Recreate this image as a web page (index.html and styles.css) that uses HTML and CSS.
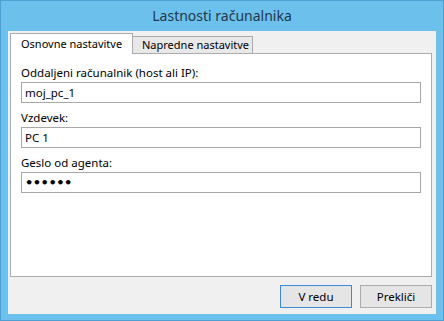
FILE: index.html
```html
<!DOCTYPE html>
<html lang="sl">
<head>
    <meta charset="UTF-8">
    <meta name="viewport" content="width=device-width, initial-scale=1.0">
    <title>Lastnosti računalnika</title>
    <link rel="stylesheet" href="styles.css">
</head>
<body>
    <div class="window">
        <div class="titlebar">Lastnosti računalnika</div>
        <div class="client">
            <div class="tabs">
                <div class="tab active">Osnovne nastavitve</div>
                <div class="tab">Napredne nastavitve</div>
            </div>
            <div class="panel">
                <label for="host">Oddaljeni računalnik (host ali IP):</label>
                <input type="text" id="host" value="moj_pc_1">
                <label for="alias">Vzdevek:</label>
                <input type="text" id="alias" value="PC 1">
                <label for="pass">Geslo od agenta:</label>
                <input type="password" id="pass" value="secret">
            </div>
            <div class="buttons">
                <button class="default">V redu</button>
                <button>Prekliči</button>
            </div>
        </div>
    </div>
</body>
</html>
```

FILE: styles.css
```css
html, body {
    margin: 0;
    padding: 0;
}

body {
    font-family: 'Noto Sans', 'Open Sans', sans-serif;
    font-size: 11.5px;
    color: #000;
}

.window {
    width: 444px;
    height: 321px;
    box-sizing: border-box;
    background-color: #6bc0ec;
    border: 1px solid #4f9fd2;
    padding: 0 7px 7px 7px;
    display: flex;
    flex-direction: column;
}

.titlebar {
    height: 30px;
    line-height: 30px;
    text-align: center;
    font-size: 14px;
    color: #22384c;
}

.client {
    flex: 1;
    background-color: #f0f0f0;
    padding: 2px 4px 6px 2px;
    display: flex;
    flex-direction: column;
}

.tabs {
    display: flex;
    align-items: flex-end;
    height: 20px;
    position: relative;
    z-index: 1;
}

.tab {
    height: 17px;
    line-height: 16px;
    padding: 0 0 0 9px;
    box-sizing: border-box;
    border: 1px solid #acacac;
    border-bottom: none;
    background-color: #e8e8e8;
    width: 121px;
    white-space: nowrap;
    overflow: hidden;
    font-size: 11px;
}

.tab.active {
    height: 21px;
    line-height: 19px;
    background-color: #fff;
    width: 123px;
    margin-bottom: -1px;
    margin-right: -1px;
    padding-left: 10px;
    position: relative;
    z-index: 2;
}

.panel {
    height: 224px;
    box-sizing: border-box;
    background-color: #fff;
    border: 1px solid #acacac;
    padding: 11px 10px 0 10px;
}

label {
    display: block;
    line-height: 15px;
    margin-bottom: 2px;
}

input {
    display: block;
    width: 100%;
    height: 21px;
    box-sizing: border-box;
    border: 1px solid #a8a8a8;
    padding: 0 3px;
    margin: 0 0 7px 0;
    font-family: inherit;
    font-size: 11.5px;
    outline: none;
}

input[type="password"] {
    font-family: 'DejaVu Sans', sans-serif;
    font-size: 13px;
    font-weight: bold;
    letter-spacing: -0.5px;
}

.buttons {
    display: flex;
    justify-content: flex-end;
    gap: 8px;
    margin-top: 8px;
}

button {
    width: 72px;
    height: 23px;
    box-sizing: border-box;
    border: 1px solid #acacac;
    background-color: #e5e5e5;
    font-family: inherit;
    font-size: 11.5px;
    padding: 0;
    color: #000;
}

button.default {
    border-color: #3c8ad8;
}
```
